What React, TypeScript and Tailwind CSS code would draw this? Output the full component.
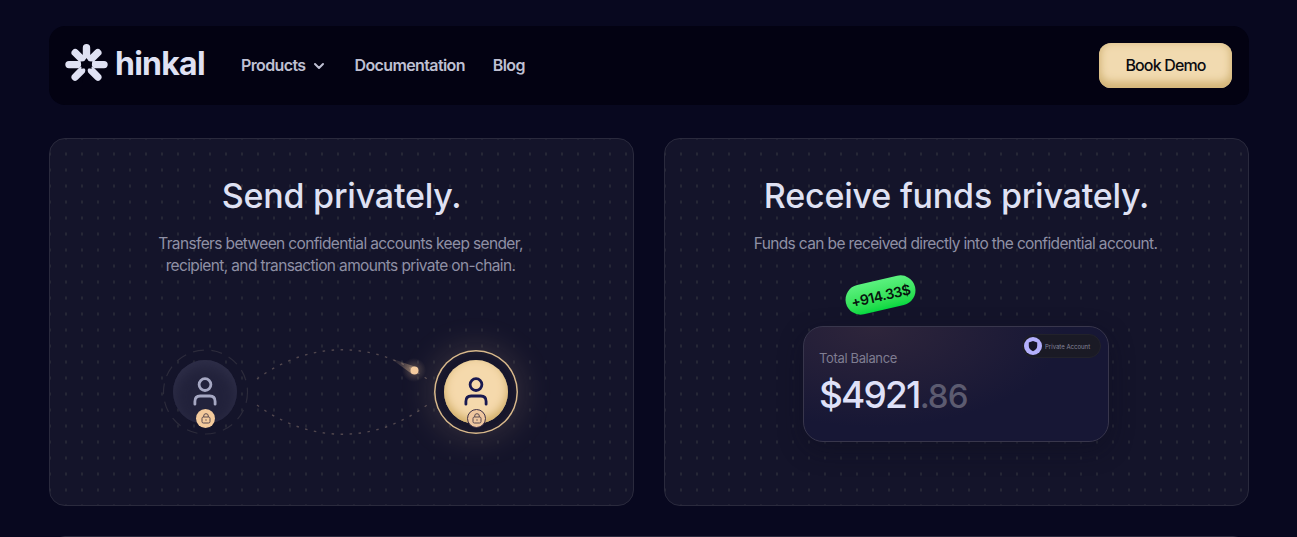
import React from "react";
import { FiChevronDown } from "react-icons/fi";

interface FeatureCardProps {
    title: React.ReactNode;
    description: React.ReactNode;
    children: React.ReactNode;
}

interface PersonProps {
    color: string;
}

const LogoMark = () => (
    <svg width="44" height="40" viewBox="0 0 44 40" fill="none">
        <g stroke="#dfe1f3" strokeWidth="7.4" strokeLinecap="round">
            <path d="M21.5 4.8V13M10.2 9.7L16.5 15.8M32.8 9.7L26.5 15.8M4 21.6H12.5M39 21.6H30.5" />
            <path d="M10.2 34L16.5 27.6M32.8 34L26.5 27.6" />
        </g>
        <path d="M21.5 15L23.5 18.2L27.5 18.6L26.2 21.8L26.7 25.8L21.5 25L16.3 25.8L16.8 21.8L15.5 18.6L19.5 18.2Z" fill="#030212" />
        <path d="M17 40L21.5 25L26 40Z" fill="#030212" />
    </svg>
);

const Person = ({ color }: PersonProps) => (
    <svg width="24" height="30" viewBox="0 0 24 30" fill="none" stroke={color} strokeWidth="2.8" strokeLinecap="round">
        <circle cx="12" cy="7.6" r="5.9" />
        <path d="M1.9 27.2V24.5C1.9 21 4 19 7.2 19H16.8C20 19 22.1 21 22.1 24.5V27.2" />
    </svg>
);

const Lock = () => (
    <svg width="10" height="11" viewBox="0 0 10 11" fill="none" stroke="#5b4a50" strokeWidth="1">
        <rect x="1" y="4" width="8" height="6" rx="1.4" />
        <path d="M2.7 4V3a2.3 2.3 0 0 1 4.6 0V4M5 6.3V7.7" />
    </svg>
);

const Navbar = () => (
    <header className="flex h-[79px] w-[1200px] items-center justify-between rounded-2xl bg-[#030212] pr-[17px] pl-4">
        <div className="flex items-center">
            <div className="flex items-center gap-1.5 pb-[5px]">
                <LogoMark />
                <span className="mt-0.5 w-[90px] text-[32px] leading-none font-bold tracking-[-0.75px] text-[#dfe1f3]">hinkal</span>
            </div>
            <nav className="ml-9 flex items-center gap-7 pb-0.5 text-base font-semibold tracking-[-0.62px] text-[#bfc0d3]">
                <a className="flex items-center gap-[5px]">
                    Products
                    <FiChevronDown className="mt-0.5 h-4 w-4" strokeWidth={3} />
                </a>
                <a>Documentation</a>
                <a>Blog</a>
            </nav>
        </div>
        <button className="h-[45px] w-[133px] rounded-xl bg-[#f1dab0] pb-0.5 text-base font-medium tracking-[-0.85px] text-[#0c0c10] shadow-[inset_0_-6px_8px_#d3b578,inset_0_0_8px_#dcc08a]">
            Book Demo
        </button>
    </header>
);

const FeatureCard = ({ title, description, children }: FeatureCardProps) => (
    <section className="flex h-[368px] w-[585px] flex-col items-center overflow-hidden rounded-2xl border border-[#2a2a3d] bg-[#14142a] bg-[radial-gradient(ellipse_1.3px_2.4px_at_8px_8px,#262736_50%,transparent)] bg-size-[16px_16px] bg-position-[8px_7px] pt-[34px]">
        <h2 className="text-[34px] leading-[46px] font-medium tracking-[-0.2px] whitespace-nowrap text-[#dfe1f3]">{title}</h2>
        <p className="mt-3.5 mr-0.5 text-center text-[15.5px] leading-[22px] tracking-[-0.63px] whitespace-nowrap text-[#8f90a5]">{description}</p>
        {children}
    </section>
);

const TransferAnimation = () => (
    <div className="relative mt-[43px] mr-[3px] h-[150px] w-[420px]">
        <svg className="absolute inset-0" width="420" height="150" viewBox="0 0 420 150" fill="none">
            <defs>
                <linearGradient id="trail" x1="0" y1="0" x2="1" y2="0.5">
                    <stop stopColor="#f1c89b" stopOpacity="0" />
                    <stop offset="1" stopColor="#f1c89b" stopOpacity="0.4" />
                </linearGradient>
                <radialGradient id="glow">
                    <stop stopColor="#f1c89b" stopOpacity="0.3" />
                    <stop offset="1" stopColor="#f1c89b" stopOpacity="0" />
                </radialGradient>
            </defs>
            <circle cx="75.5" cy="72" r="42" stroke="#2c2b3b" strokeWidth="1.2" strokeDasharray="11 7.5" />
            <path d="M127 59C180 20 245 20 297 59M127 85C180 124 245 124 297 85" stroke="#51474e" strokeWidth="1.4" strokeDasharray="2.5 6.5" />
            <circle cx="284" cy="50" r="12" fill="url(#glow)" />
            <path d="M260 38L286 47L282 54Z" fill="url(#trail)" />
            <circle cx="284.5" cy="50.5" r="4" fill="#f5cc9f" />
        </svg>
        <div className="absolute top-[40px] left-[43px] flex h-16 w-16 items-center justify-center rounded-full bg-[#22223b] shadow-[inset_0_5px_14px_#30304a]">
            <Person color="#a6a8c3" />
        </div>
        <div className="absolute top-[89px] left-[66px] flex h-[19px] w-[19px] items-center justify-center rounded-full bg-[#f3ca9c]">
            <Lock />
        </div>
        <div className="absolute top-[30px] left-[304px] flex h-[84px] w-[84px] items-center justify-center rounded-full bg-[#17162b] shadow-[0_0_36px_#f1c89b33,inset_0_0_0_1.5px_#d9b98c,inset_0_0_10px_#f1c89b12]">
            <div className="flex h-16 w-16 items-center justify-center rounded-full bg-[#f5d9ac] shadow-[inset_0_-4px_10px_#cda961]">
                <Person color="#191950" />
            </div>
        </div>
        <div className="absolute top-[89px] left-[337px] flex h-[19px] w-[19px] items-center justify-center rounded-full border border-[#3d3047] bg-[#eec69f]">
            <Lock />
        </div>
    </div>
);

const BalanceCard = () => (
    <div className="relative mt-[71px] mr-px h-[116px] w-[306px] rounded-[20px] border border-[#38364c] bg-[#171735] bg-[radial-gradient(ellipse_190px_100px_at_70px_0px,#2e253b,transparent)] px-[15px] pt-[21px] shadow-[0_8px_24px_#0d0d1f66]">
        <p className="text-[13px] leading-5 tracking-[-0.35px] text-[#7f7d91]">Total Balance</p>
        <p className="mt-[5px] leading-[44px] font-medium whitespace-nowrap">
            <span className="text-[37px] tracking-[-1.8px] text-[#dfe1f8]">$4921</span>
            <span className="text-[33px] tracking-[-1px] text-[#5c5b70]">.86</span>
        </p>
        <div className="absolute top-[7px] right-[7px] flex h-6 w-[79px] items-center gap-[3px] rounded-full border border-[#22222b] bg-[#1a1a25] pl-px text-[6px] text-[#85859a]">
            <svg width="18" height="18" viewBox="0 0 18 18">
                <circle cx="9" cy="9" r="9" fill="#b4b0fc" />
                <path d="M9 4L13.2 5.5V9C13.2 11.5 11.5 13 9 14.2C6.5 13 4.8 11.5 4.8 9V5.5Z" fill="#171728" />
            </svg>
            Private Account
        </div>
        <div className="absolute -top-[47px] left-[41px] flex h-[30px] w-[71px] rotate-[-13deg] items-center justify-center rounded-full bg-linear-to-b from-[#5af17e] to-[#02d940] text-[14px] font-semibold tracking-[-0.5px] text-[#06130d]">
            +914.33$
        </div>
    </div>
);

const App = () => {
    return (
        <main className="h-[537px] overflow-hidden bg-[#08081f] pt-[26px] pr-12 pl-[49px] font-['Inter',sans-serif]">
            <Navbar />
            <div className="mt-[33px] flex w-[1200px] justify-between">
                <FeatureCard
                    title="Send privately."
                    description={<>Transfers between confidential accounts keep sender,<br />recipient, and transaction amounts private on-chain.</>}
                >
                    <TransferAnimation />
                </FeatureCard>
                <FeatureCard title="Receive funds privately." description="Funds can be received directly into the confidential account.">
                    <BalanceCard />
                </FeatureCard>
            </div>
            <div className="mt-[30px] h-10 rounded-t-2xl border border-[#2a2a3d] bg-[#14142a]" />
        </main>
    );
};

export default App;
